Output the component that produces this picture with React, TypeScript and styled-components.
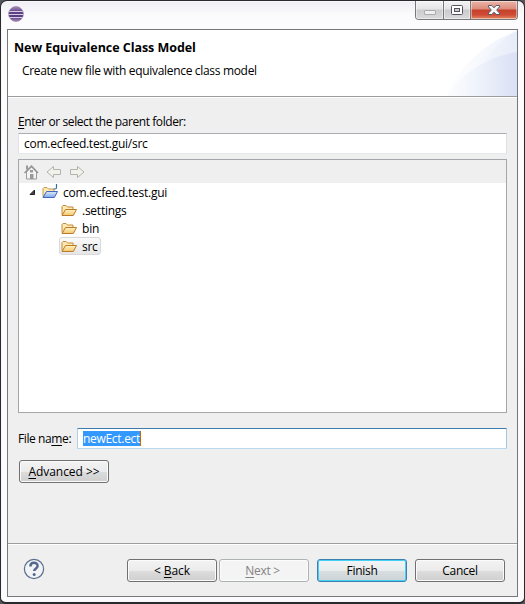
import React from "react";
import styled, { createGlobalStyle, css } from "styled-components";

const GlobalStyle = createGlobalStyle`
  * { box-sizing: border-box; }
  html, body { margin: 0; padding: 0; }
  body { background: #55565a; overflow: hidden; }
`;

const Window = styled.div`
  width: 525px;
  height: 604px;
  padding: 0 6px 5px;
  display: flex;
  flex-direction: column;
  border: 1px solid #29292e;
  border-bottom-width: 2px;
  border-radius: 7px 7px 6px 6px;
  background: linear-gradient(180deg, #eeeef5 0, #fbfbfd 14px, #fdfdfe 60px, #fbfafc 100%);
  box-shadow: inset 0 0 0 1px #f8f8fb;
  font-family: "Open Sans", "Noto Sans", sans-serif;
  font-size: 12px;
  color: #000;
`;

const TitleBar = styled.header`
  height: 28px;
  flex: none;
  display: flex;
  justify-content: space-between;
  align-items: flex-start;
`;

const AppIcon = styled.svg`
  width: 16px;
  height: 16px;
  margin: 5px 0 0 1px;
`;

const Controls = styled.div`
  display: flex;
  width: 103px;
  height: 19px;
  border: 1px solid #77777c;
  border-top: 0;
  border-radius: 0 0 4px 4px;
  overflow: hidden;
`;

const Control = styled.button<{ $kind: "min" | "max" | "close" }>`
  flex: none;
  width: ${(p) => (p.$kind === "close" ? 46 : p.$kind === "min" ? 28 : 27)}px;
  height: 18px;
  padding: 0;
  border: 0;
  border-right: ${(p) => (p.$kind === "close" ? "0" : "1px solid #77777c")};
  box-shadow: inset 0 0 0 1px rgba(255, 255, 255, 0.45);
  background: ${(p) =>
    p.$kind === "close"
      ? "linear-gradient(180deg, #e9b5aa 0, #dd8b79 8px, #c5402a 9px, #cf4c35 14px, #e38b68 100%)"
      : "linear-gradient(180deg, #f3f3f5 0, #e4e4e7 8px, #cbcbcf 9px, #dadadd 100%)"};
  svg { display: block; }
`;

const Client = styled.main`
  flex: 1;
  min-height: 0;
  display: flex;
  flex-direction: column;
  border: 1px solid #77777b;
  background: #efefef;
`;

const Banner = styled.section`
  height: 67px;
  flex: none;
  display: flex;
  justify-content: space-between;
  background: #fff;
  border-bottom: 1px solid #9d9d9f;
  box-shadow: 0 1px 0 #fff;
`;

const BannerText = styled.div`
  padding: 9px 0 0 6px;
`;

const Text = styled.span<{ $spacing?: number }>`
  display: inline-block;
  white-space: pre;
  line-height: 17px;
  letter-spacing: ${(p) => p.$spacing ?? -0.3}px;
  u { text-decoration-thickness: 1px; text-underline-offset: 2px; text-decoration-skip-ink: none; }
`;

const Title = styled.h1`
  margin: 0;
  font-size: 12.5px;
  line-height: 17px;
  font-weight: 700;
`;

const Subtitle = styled.p`
  margin: 6px 0 0 8px;
  line-height: 17px;
`;

const Body = styled.section`
  flex: 1;
  padding: 16px 10px 0;
  display: flex;
  flex-direction: column;
  align-items: stretch;
`;

const Label = styled.label`
  height: 17px;
  margin-bottom: 3px;
  line-height: 17px;
  flex: none;
`;

const Field = styled.div<{ $focused?: boolean }>`
  flex: ${(p) => (p.$focused ? "1" : "none")};
  height: 21px;
  padding: 1px 5px;
  display: flex;
  align-items: center;
  background: #fff;
  border: 1px solid;
  border-radius: 1px;
  border-color: ${(p) => (p.$focused ? "#3d7bad #a4c9e3 #b7d9ed #b5cfe7" : "#abadb3 #dbdfe6 #e3e9ef #e2e3ea")};
`;

const Selection = styled.span`
  height: 15px;
  display: flex;
  align-items: center;
  width: 58px;
  background: #3399ff;
  color: #fff;
  border-right: 1px solid #cc6600;
`;

const Tree = styled.div`
  height: 254px;
  margin-top: 5px;
  flex: none;
  border: 1px solid #a5a6aa;
  background: #fff;
`;

const ToolBar = styled.div`
  height: 23px;
  padding: 4px 0 0 4px;
  display: flex;
  gap: 7px;
  background: #efefef;
  svg { width: 16px; height: 16px; }
`;

const Row = styled.div<{ $depth: number }>`
  height: 18px;
  padding-left: ${(p) => (p.$depth === 0 ? 8 : 40)}px;
  display: flex;
  align-items: center;
  svg { flex: none; }
`;

const Item = styled.div<{ $selected?: boolean }>`
  height: 18px;
  padding: 0 3px 0 1px;
  display: flex;
  align-items: center;
  gap: 5px;
  border: 1px solid transparent;
  border-radius: 3px;
  ${(p) =>
    p.$selected &&
    css`
      border-color: #d9d9d9;
      background: linear-gradient(#fafafa, #e6e6e6);
    `}
`;

const Twisty = styled.svg`
  width: 13px;
  height: 12px;
`;

const FileRow = styled.div`
  display: flex;
  align-items: center;
  gap: 6px;
  margin-top: 15px;
`;

const FileLabel = styled.label`
  width: 53px;
  flex: none;
`;

const buttonTones = {
  normal: css`
    border-color: #707070;
    background: linear-gradient(#f3f3f3 0, #ebebeb 50%, #dddddd 50%, #cfcfcf 100%);
    box-shadow: inset 0 0 0 1px #fbfbfb;
  `,
  disabled: css`
    border-color: #adb2b5;
    background: #f4f4f4;
    color: #838383;
    box-shadow: inset 0 0 0 1px #fcfcfc;
  `,
  primary: css`
    border-color: #3c7fb1;
    background: linear-gradient(#f2f4f4 0, #e9eced 50%, #d9dfe1 50%, #cdd4d6 100%);
    box-shadow: inset 0 0 0 1px #45d0f8;
  `,
};

const Button = styled.button<{ $tone?: keyof typeof buttonTones }>`
  width: 90px;
  height: 23px;
  flex: none;
  padding: 0;
  display: flex;
  align-items: center;
  justify-content: center;
  border: 1px solid;
  border-radius: 3px;
  font: inherit;
  color: #000;
  ${(p) => buttonTones[p.$tone ?? "normal"]}
`;

const AdvancedRow = styled.div`
  margin: 11px 0 0 1px;
`;

const Footer = styled.footer`
  height: 53px;
  flex: none;
  padding: 14px 12px 0 15px;
  display: flex;
  justify-content: space-between;
  align-items: flex-start;
  border-top: 1px solid #9d9d9f;
  box-shadow: inset 0 1px 0 #fff;
`;

const ButtonBar = styled.div`
  display: flex;
  gap: 8px;
  padding-top: 1px;
`;

const Pair = styled.div`
  display: flex;
  gap: 2px;
`;

const EclipseIcon = () => (
  <AppIcon viewBox="0 0 16 16">
    <defs>
      <linearGradient id="orb" x1="0" x2="0" y1="0" y2="1">
        <stop offset="0" stopColor="#a98db8" />
        <stop offset=".35" stopColor="#5d4288" />
        <stop offset=".7" stopColor="#563c7d" />
        <stop offset="1" stopColor="#a68abb" />
      </linearGradient>
    </defs>
    <circle cx="8" cy="8" r="7.4" fill="url(#orb)" stroke="#8f78a5" strokeWidth=".7" />
    <path d="M1.2 5.5h13.6M.5 8.5h15M1.2 11.5h13.6" stroke="#d5cbe3" strokeWidth="1" />
  </AppIcon>
);

const BannerArt = () => (
  <svg width="76" height="66" viewBox="0 0 76 66">
    <defs>
      <linearGradient id="sweep" x1="0" x2="1">
        <stop offset="0" stopColor="#fff" />
        <stop offset="1" stopColor="#eef2fb" />
      </linearGradient>
      <linearGradient id="sweepMid" x1="0" x2="1">
        <stop offset="0" stopColor="#f8fafe" />
        <stop offset="1" stopColor="#e6ecf8" />
      </linearGradient>
      <linearGradient id="sweepLow" x1="0" x2="1">
        <stop offset="0" stopColor="#fefeff" />
        <stop offset=".45" stopColor="#eff3fb" />
        <stop offset="1" stopColor="#dae0f5" />
      </linearGradient>
    </defs>
    <path d="M4 66Q29 18 76 1V66Z" fill="url(#sweep)" />
    <path d="M28 66Q42 18 76 1V66Z" fill="url(#sweepMid)" />
    <path d="M4 66Q33 29 76 22V66Z" fill="url(#sweepLow)" />
  </svg>
);

const HomeIcon = () => (
  <svg viewBox="0 0 16 16">
    <path d="M3.5 8v7h10V8L8.5 3Z" fill="#f4f4f4" stroke="#9a9a9a" />
    <path d="M1.5 9L8.5 2 15 9" fill="none" stroke="#929292" strokeWidth="1.3" />
    <path d="M4 1.5v4" stroke="#999" strokeWidth="2" />
    <path d="M7 6h3v2.5H7zM7 10h3.5v5H7z" fill="#999" />
  </svg>
);

const ArrowIcon = ({ right }: { right?: boolean }) => (
  <svg viewBox="0 0 16 16">
    <path
      d={right ? "M1.5 5.5h7V2.5L15 8 8.5 13.5v-3h-7Z" : "M14.5 5.5h-7V2.5L1 8l6.5 5.5v-3h7Z"}
      fill="#f2f2ec"
      stroke="#b3b3ad"
      strokeLinejoin="round"
    />
  </svg>
);

const FolderIcon = ({ project }: { project?: boolean }) => (
  <svg width="16" height="16" viewBox="0 0 16 16">
    <defs>
      <linearGradient id="gold" x1="0" x2="0" y1="0" y2="1">
        <stop offset="0" stopColor="#fff3c4" />
        <stop offset="1" stopColor="#f3c66b" />
      </linearGradient>
      <linearGradient id="blue" x1="0" x2="0" y1="0" y2="1">
        <stop offset="0" stopColor="#dcecff" />
        <stop offset="1" stopColor="#7fa9ea" />
      </linearGradient>
    </defs>
    <path
      d="M1 12.5v-8l1-1h3l1.5 1.5h5.5v3"
      fill="#ffe9ae"
      stroke={project ? "#c29a52" : "#c28a3c"}
    />
    <path
      d="M1 13.5L4.5 7.5h11l-3.2 6Z"
      fill={project ? "url(#blue)" : "url(#gold)"}
      stroke={project ? "#4265bd" : "#b87a2b"}
      strokeLinejoin="round"
    />
    {project && <path d="M14.5 0v3.5q0 1.5-1.5 1.5H11.5" fill="none" stroke="#386f9a" strokeWidth="1.2" />}
  </svg>
);

const HelpIcon = () => (
  <svg width="22" height="22" viewBox="0 0 22 22">
    <circle cx="11" cy="11" r="9.6" fill="#f2f3f5" stroke="#5b7090" strokeWidth="1.2" />
    <path
      d="M7.4 8.4C7.4 3.6 14.6 3.8 14.6 7.9c0 2.5-3.4 2.6-3.4 5.2"
      fill="none"
      stroke="#53698f"
      strokeWidth="2.5"
    />
    <circle cx="11.2" cy="16.4" r="1.5" fill="#53698f" />
  </svg>
);

const folders = [
  { name: ".settings", spacing: -0.25 },
  { name: "bin", spacing: -0.2 },
  { name: "src", spacing: -0.3, selected: true },
];

export default function App() {
  return (
    <>
      <GlobalStyle />
      <Window>
        <TitleBar>
          <EclipseIcon />
          <Controls>
            <Control $kind="min" aria-label="Minimize">
              <svg width="27" height="18"><rect x="8.5" y="9.5" width="11" height="4" rx=".5" fill="#eee" stroke="#aaaab0" /></svg>
            </Control>
            <Control $kind="max" aria-label="Maximize">
              <svg width="26" height="18"><rect x="7.5" y="4.5" width="11" height="9" rx="1" fill="#fff" stroke="#54545e" /><rect x="10.5" y="7.5" width="5" height="3" fill="#ccc" stroke="#54545e" /></svg>
            </Control>
            <Control $kind="close" aria-label="Close">
              <svg width="46" height="18"><path d="M17.5 4.5h3.3L23 6.8l2.2-2.3h3.3v1.4L25.7 9l2.8 3.1v1.4h-3.3L23 11.2l-2.2 2.3h-3.3v-1.4L20.3 9l-2.8-3.1Z" fill="#f6f6f6" stroke="#535666" strokeLinejoin="round" /></svg>
            </Control>
          </Controls>
        </TitleBar>
        <Client>
          <Banner>
            <BannerText>
              <Title><Text $spacing={-0.05}>New Equivalence Class Model</Text></Title>
              <Subtitle><Text $spacing={-0.32}>Create new file with equivalence class model</Text></Subtitle>
            </BannerText>
            <BannerArt />
          </Banner>
          <Body>
            <Label><Text $spacing={-0.42}><u>E</u>nter or select the parent folder:</Text></Label>
            <Field><Text $spacing={-0.26}>com.ecfeed.test.gui/src</Text></Field>
            <Tree>
              <ToolBar><HomeIcon /><ArrowIcon /><ArrowIcon right /></ToolBar>
              <Row $depth={0}>
                <Twisty><path d="M7.5 4v4.5H3Z" fill="#444" stroke="#222" strokeLinejoin="round" /></Twisty>
                <Item><FolderIcon project /><Text $spacing={-0.25}>com.ecfeed.test.gui</Text></Item>
              </Row>
              {folders.map((f) => (
                <Row key={f.name} $depth={1}>
                  <Item $selected={f.selected}><FolderIcon /><Text $spacing={f.spacing}>{f.name}</Text></Item>
                </Row>
              ))}
            </Tree>
            <FileRow>
              <FileLabel><Text $spacing={-0.4}>File na<u>m</u>e:</Text></FileLabel>
              <Field $focused><Selection><Text>newEct.ect</Text></Selection></Field>
            </FileRow>
            <AdvancedRow>
              <Button><Text $spacing={-0.05}><u>A</u>dvanced &gt;&gt;</Text></Button>
            </AdvancedRow>
          </Body>
          <Footer>
            <HelpIcon />
            <ButtonBar>
              <Pair>
                <Button><Text $spacing={-0.1}>&lt; <u>B</u>ack</Text></Button>
                <Button $tone="disabled"><Text $spacing={-0.3}><u>N</u>ext &gt; </Text></Button>
              </Pair>
              <Button $tone="primary"><Text>Finish</Text></Button>
              <Button><Text>Cancel</Text></Button>
            </ButtonBar>
          </Footer>
        </Client>
      </Window>
    </>
  );
}
